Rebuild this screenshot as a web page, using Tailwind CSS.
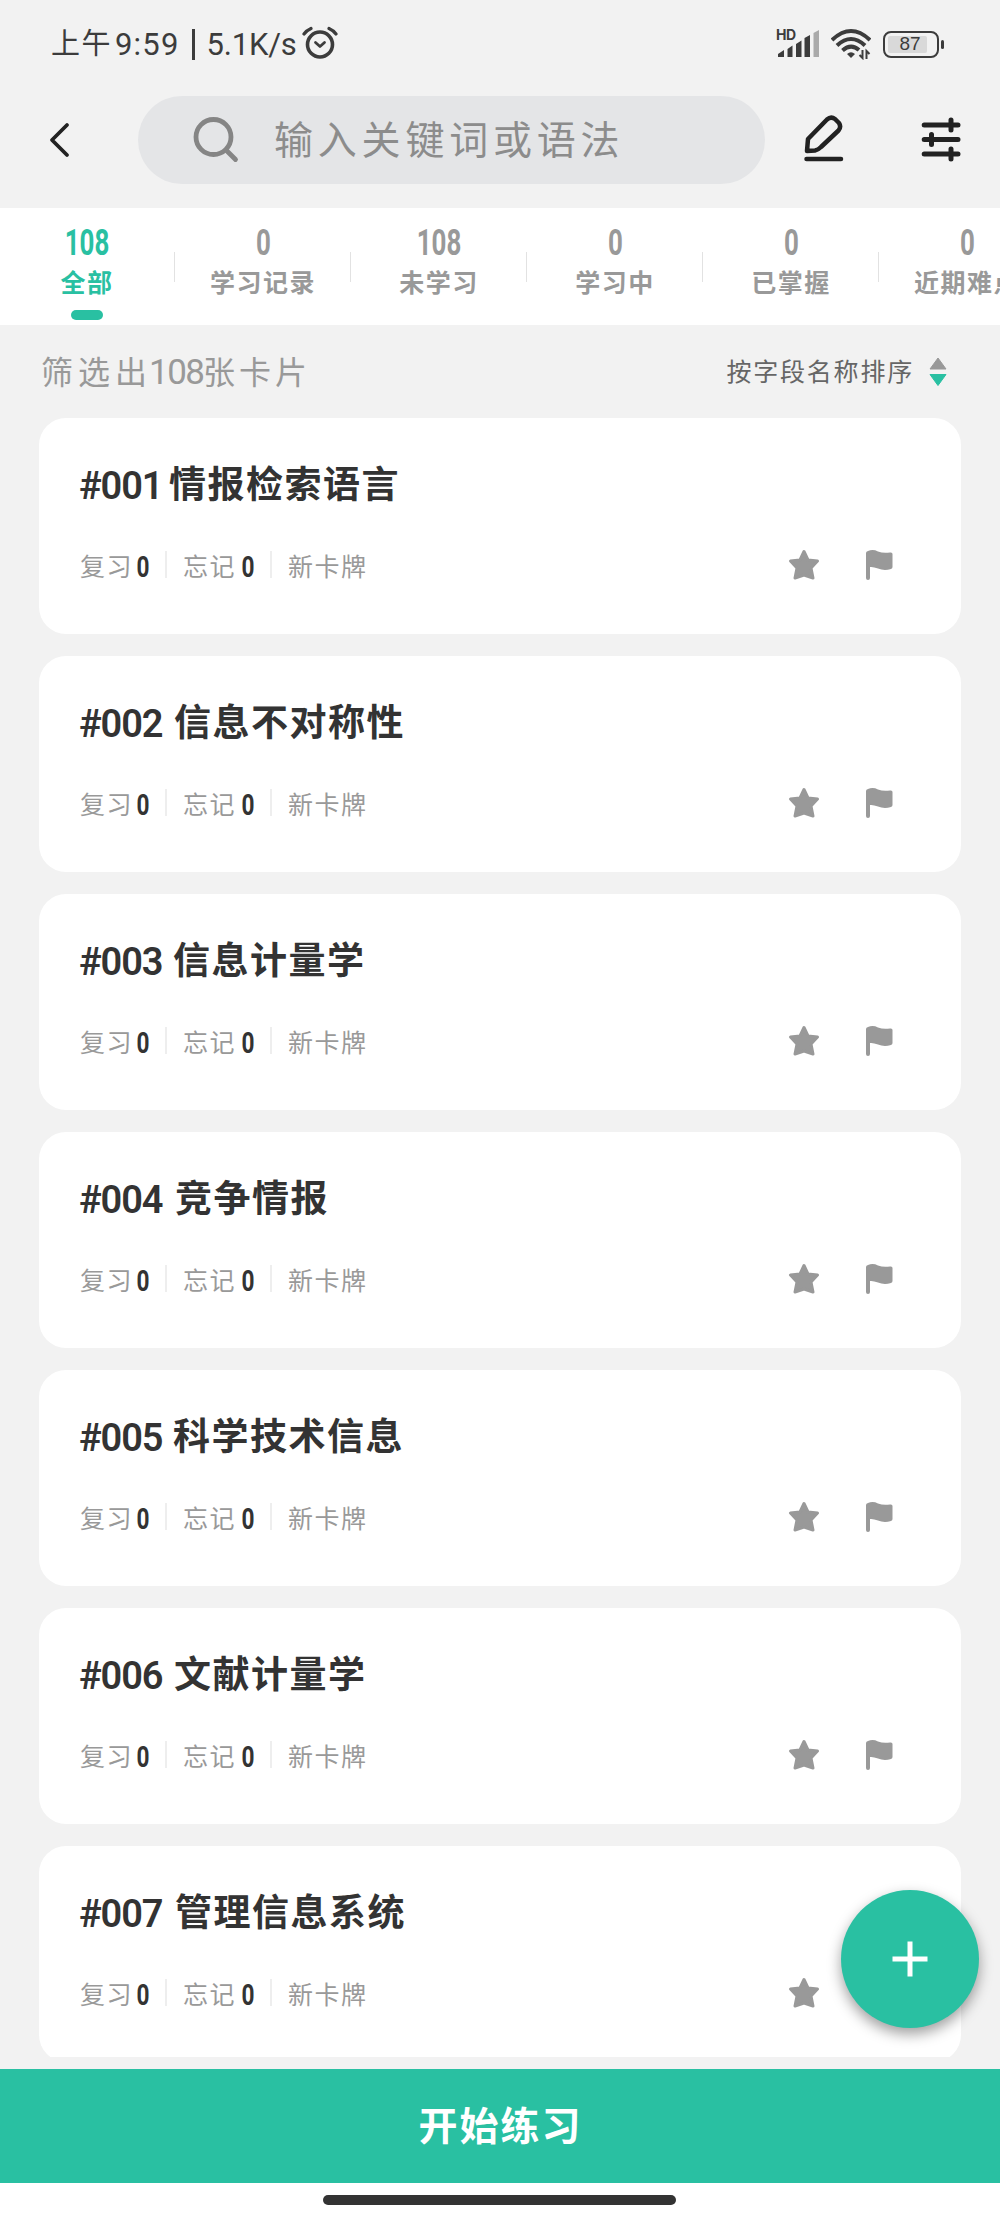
<!DOCTYPE html>
<html lang="zh-CN">
<head>
<meta charset="utf-8">
<meta name="viewport" content="width=device-width, initial-scale=1">
<title>卡片列表</title>
<script src="https://cdn.jsdelivr.net/npm/@tailwindcss/browser@4"></script>
</head>
<body class="bg-[#f2f2f2] font-['Roboto','Noto_Sans_CJK_SC',sans-serif]">
<div class="relative flex h-[2222px] w-[1000px] flex-col overflow-hidden whitespace-nowrap">

  <!-- Status bar -->
  <div class="flex h-[88px] shrink-0 items-center pl-[51px] pr-[56px] text-[#3c3c3c]">
    <span class="w-[64px] pt-[1px] text-[29px] tracking-[1.5px]">上午</span>
    <span class="w-[72px] pt-[2px] text-[31px] tracking-[1.2px]">9:59</span>
    <span class="mx-[5px] h-[31px] w-[2.5px] bg-[#3c3c3c]"></span>
    <span class="ml-[7px] w-[94px] pt-[2px] text-[31px] tracking-[-0.2px]">5.1K/s</span>
    <svg class="-mt-[2px] ml-[1px] h-[34px] w-[36px] shrink-0" viewBox="0 0 36 34" fill="none" stroke="#3c3c3c" stroke-linecap="round" stroke-linejoin="round"><circle cx="18" cy="18.5" r="12.5" stroke-width="3.6"/><path d="M13.5 16.5L18 20.5L22.5 16.5" stroke-width="2.8"/><path d="M2 8Q4.500 4.500 9 2.500M34 8Q31.500 4.500 27 2.500" stroke-width="3.200"/></svg>
    <div class="ml-auto flex items-center">
      <svg class="h-[32px] w-[44px] overflow-visible" viewBox="0 0 44 32"><text x="0" y="12" font-family="Inter" font-size="14" font-weight="700" textLength="20" fill="#3c3c3c">HD</text><g fill="#3c3c3c"><path d="M2 29V26L8 22V29ZM11.500 29V21L16.500 17.500V29ZM20 29V16L25.500 12.500V29ZM28.500 29V10L34 7V29Z"/></g><path d="M37.500 29V5L43 2V29Z" fill="#aaa"/></svg>
      <svg class="ml-[11px] h-[32px] w-[40px]" viewBox="0 0 40 32" fill="none" stroke="#3c3c3c" stroke-width="4"><path d="M1 12Q20 -6 39 12M6 17.500Q20 4.500 34 17.500M11.500 22.500Q20 15 28 22"/><path d="M16 26Q20 22.500 24 26L20 30Z" fill="#3c3c3c" stroke="none"/><path d="M31.500 22V30L28.500 27M35.500 31V23L38.500 26" stroke-width="2"/></svg>
      <div class="ml-[12px] flex h-[27px] w-[56px] items-center rounded-[8px] border-[2.5px] border-[#3c3c3c] p-[3px]">
        <div class="flex h-[17px] w-[39px] items-center justify-center rounded-[2px] bg-[#d9d9d9] pl-[5px] pt-[1px] font-['Liberation_Sans'] text-[19px] text-[#3c3c3c]">87</div>
      </div>
      <span class="ml-[2px] h-[9px] w-[3px] rounded-sm bg-[#3c3c3c]"></span>
    </div>
  </div>

  <!-- Search header -->
  <div class="flex h-[120px] shrink-0 items-start pl-[48px] pt-[8px]">
    <svg class="mt-[25px] h-[38px] w-[24px]" viewBox="0 0 24 38" fill="none" stroke="#222" stroke-width="3.800" stroke-linecap="round" stroke-linejoin="round"><path d="M19 4L4 19L19 34"/></svg>
    <div class="ml-[66px] flex h-[88px] w-[627px] items-center rounded-full bg-[#e4e5e7] pl-[54px]">
      <svg class="h-[48px] w-[48px]" viewBox="0 0 48 48" fill="none" stroke="#858585" stroke-width="4.800" stroke-linecap="round"><circle cx="21.500" cy="21" r="17.500"/><path d="M34 34L43.500 43.500"/></svg>
      <span class="ml-[34px] pt-[3px] text-[39px] tracking-[4.8px] text-[#8c8c8c]">输入关键词或语法</span>
    </div>
    <svg class="ml-[38px] mt-[18px] h-[48px] w-[42px]" viewBox="0 0 42 48" fill="none" stroke="#222" stroke-width="4.500" stroke-linecap="round" stroke-linejoin="round"><path d="M4 37L5 25L24 5.500Q28 2 32 5L36 9Q38.500 13 35.500 16.500L18 33Q15 36 12 36.500Z"/><path d="M3.500 45H38"/></svg>
    <svg class="ml-[76px] mt-[21px] h-[46px] w-[40px]" viewBox="0 0 40 46" fill="none" stroke="#222" stroke-width="5" stroke-linecap="round"><path d="M3.200 8H37M3.200 22.500H37M3.200 37H37M30 3V13M10.500 17.500V27.500M30 32V42"/></svg>
  </div>

  <!-- Category tabs -->
  <div id="tabs" class="-ml-[1px] flex h-[117px] shrink-0 bg-white"></div>

  <!-- Result count and sort order -->
  <div class="flex h-[93px] shrink-0 items-center pl-[41px] pr-[52px] pt-[3px]">
    <span class="w-[108px] text-[32px] tracking-[5px] text-[#999]">筛选出</span>
    <span class="w-[54px] text-[35px] tracking-[-1.5px] text-[#999]">108</span>
    <span class="text-[32px] tracking-[4px] text-[#999]">张卡片</span>
    <span class="ml-auto text-[25px] tracking-[1.8px] text-[#666]">按字段名称排序</span>
    <svg class="-mt-[2px] ml-[14px] h-[32px] w-[20px]" viewBox="0 0 20 32" stroke-linejoin="round"><path d="M10 2L18 13H2Z" fill="#999" stroke="#999"/><path d="M10 29.500L18 18.500H2Z" fill="#29c0a2" stroke="#29c0a2"/></svg>
  </div>

  <!-- Card list -->
  <div id="cards" class="flex h-[1639px] shrink-0 flex-col gap-[22px] overflow-hidden px-[39px]"></div>

  <!-- Bottom action -->
  <div class="mt-[12px] flex h-[114px] shrink-0 items-center justify-center bg-[#29c0a2] pl-[1px] pt-[3px] text-[39px] font-bold tracking-[2px] text-white">开始练习</div>
  <div class="flex grow justify-center bg-white pr-[2px] pt-[12px]"><span class="h-[10px] w-[353px] rounded-full bg-[#333]"></span></div>

  <!-- Floating add button -->
  <button class="absolute left-[841px] top-[1890px] flex h-[138px] w-[138px] items-center justify-center rounded-full bg-[#29c0a2] shadow-[0_6px_14px_rgba(0,0,0,0.38)]">
    <svg class="h-[36px] w-[36px]" viewBox="0 0 36 36" stroke="#fff" stroke-width="5"><path d="M0.500 18H35.500M18 0.500V35.500"/></svg>
  </button>
</div>

<script>
const tabs = [['108','全部'],['0','学习记录'],['108','未学习'],['0','学习中'],['0','已掌握'],['0','近期难点']];
document.getElementById('tabs').innerHTML = tabs.map(([n, label], i) => `
  <div class="relative flex w-[176px] shrink-0 flex-col items-center pt-[15px] font-bold ${i ? 'text-[#999]' : 'text-[#29c0a2]'}">
    <span class="h-[40px] scale-x-[0.72] text-[36px] leading-[40px]">${n}</span>
    <span class="mt-[4px] h-[34px] text-[25px] leading-[34px] tracking-[1.5px]">${label}</span>
    ${i ? '' : '<span class="mt-[9px] h-[10px] w-[32px] rounded-full bg-[#29c0a2]"></span>'}
    <span class="absolute right-0 top-[44px] h-[30px] w-px bg-[#e2e2e2]"></span>
  </div>`).join('');

const cards = [['#001','情报检索语言',90],['#002','信息不对称性',95],['#003','信息计量学',94],['#004','竞争情报',96],['#005','科学技术信息',94],['#006','文献计量学',95],['#007','管理信息系统',96]];
document.getElementById('cards').innerHTML = cards.map(([no, title, w]) => `
  <div class="flex h-[216px] shrink-0 flex-col rounded-[27px] bg-white pl-[40px] pr-[67px] pt-[42px]">
    <div class="flex h-[52px] items-center text-[#333]">
      <span class="text-[38px] font-semibold tracking-[-1.1px]" style="width:${w}px">${no}</span>
      <span class="text-[37px] font-bold tracking-[1.5px]">${title}</span>
    </div>
    <div class="mt-[36px] flex h-[40px] items-center pl-[1px] text-[25px] tracking-[1.5px] text-[#999]">
      <span class="w-[53px]">复习</span>
      <span class="w-[20px] scale-x-[0.78] text-center text-[29px] font-bold tracking-normal text-[#333]">0</span>
      <span class="ml-[12px] h-[27px] w-[2px] -translate-y-[4px] bg-[#eee]"></span>
      <span class="ml-[16px] w-[55px]">忘记</span>
      <span class="w-[20px] scale-x-[0.78] text-center text-[29px] font-bold tracking-normal text-[#333]">0</span>
      <span class="ml-[12px] h-[27px] w-[2px] -translate-y-[4px] bg-[#eee]"></span>
      <span class="ml-[16px]">新卡牌</span>
      <svg class="ml-auto h-[32px] w-[32px] -translate-y-[3px]" viewBox="0 0 32 32" fill="#999" stroke="#999" stroke-width="3" stroke-linejoin="round"><path d="M16 2.500L20 11L29.500 12L23 19L25 29L16 26L7 29L9 19L2.500 12L12 11Z"/></svg>
      <svg class="ml-[44px] h-[32px] w-[30px] -translate-y-[3px]" viewBox="0 0 30 32" fill="#999"><path d="M2 4Q2 2.500 4 2Q9 0 14 2.500Q19 4.500 26 3.500Q28.500 3 28.500 5V18Q28.500 19.500 27 20Q20 22 14 19.500Q9 17.500 6 18V29Q6 31 4 31T2 29Z"/></svg>
    </div>
  </div>`).join('');
</script>
</body>
</html>
